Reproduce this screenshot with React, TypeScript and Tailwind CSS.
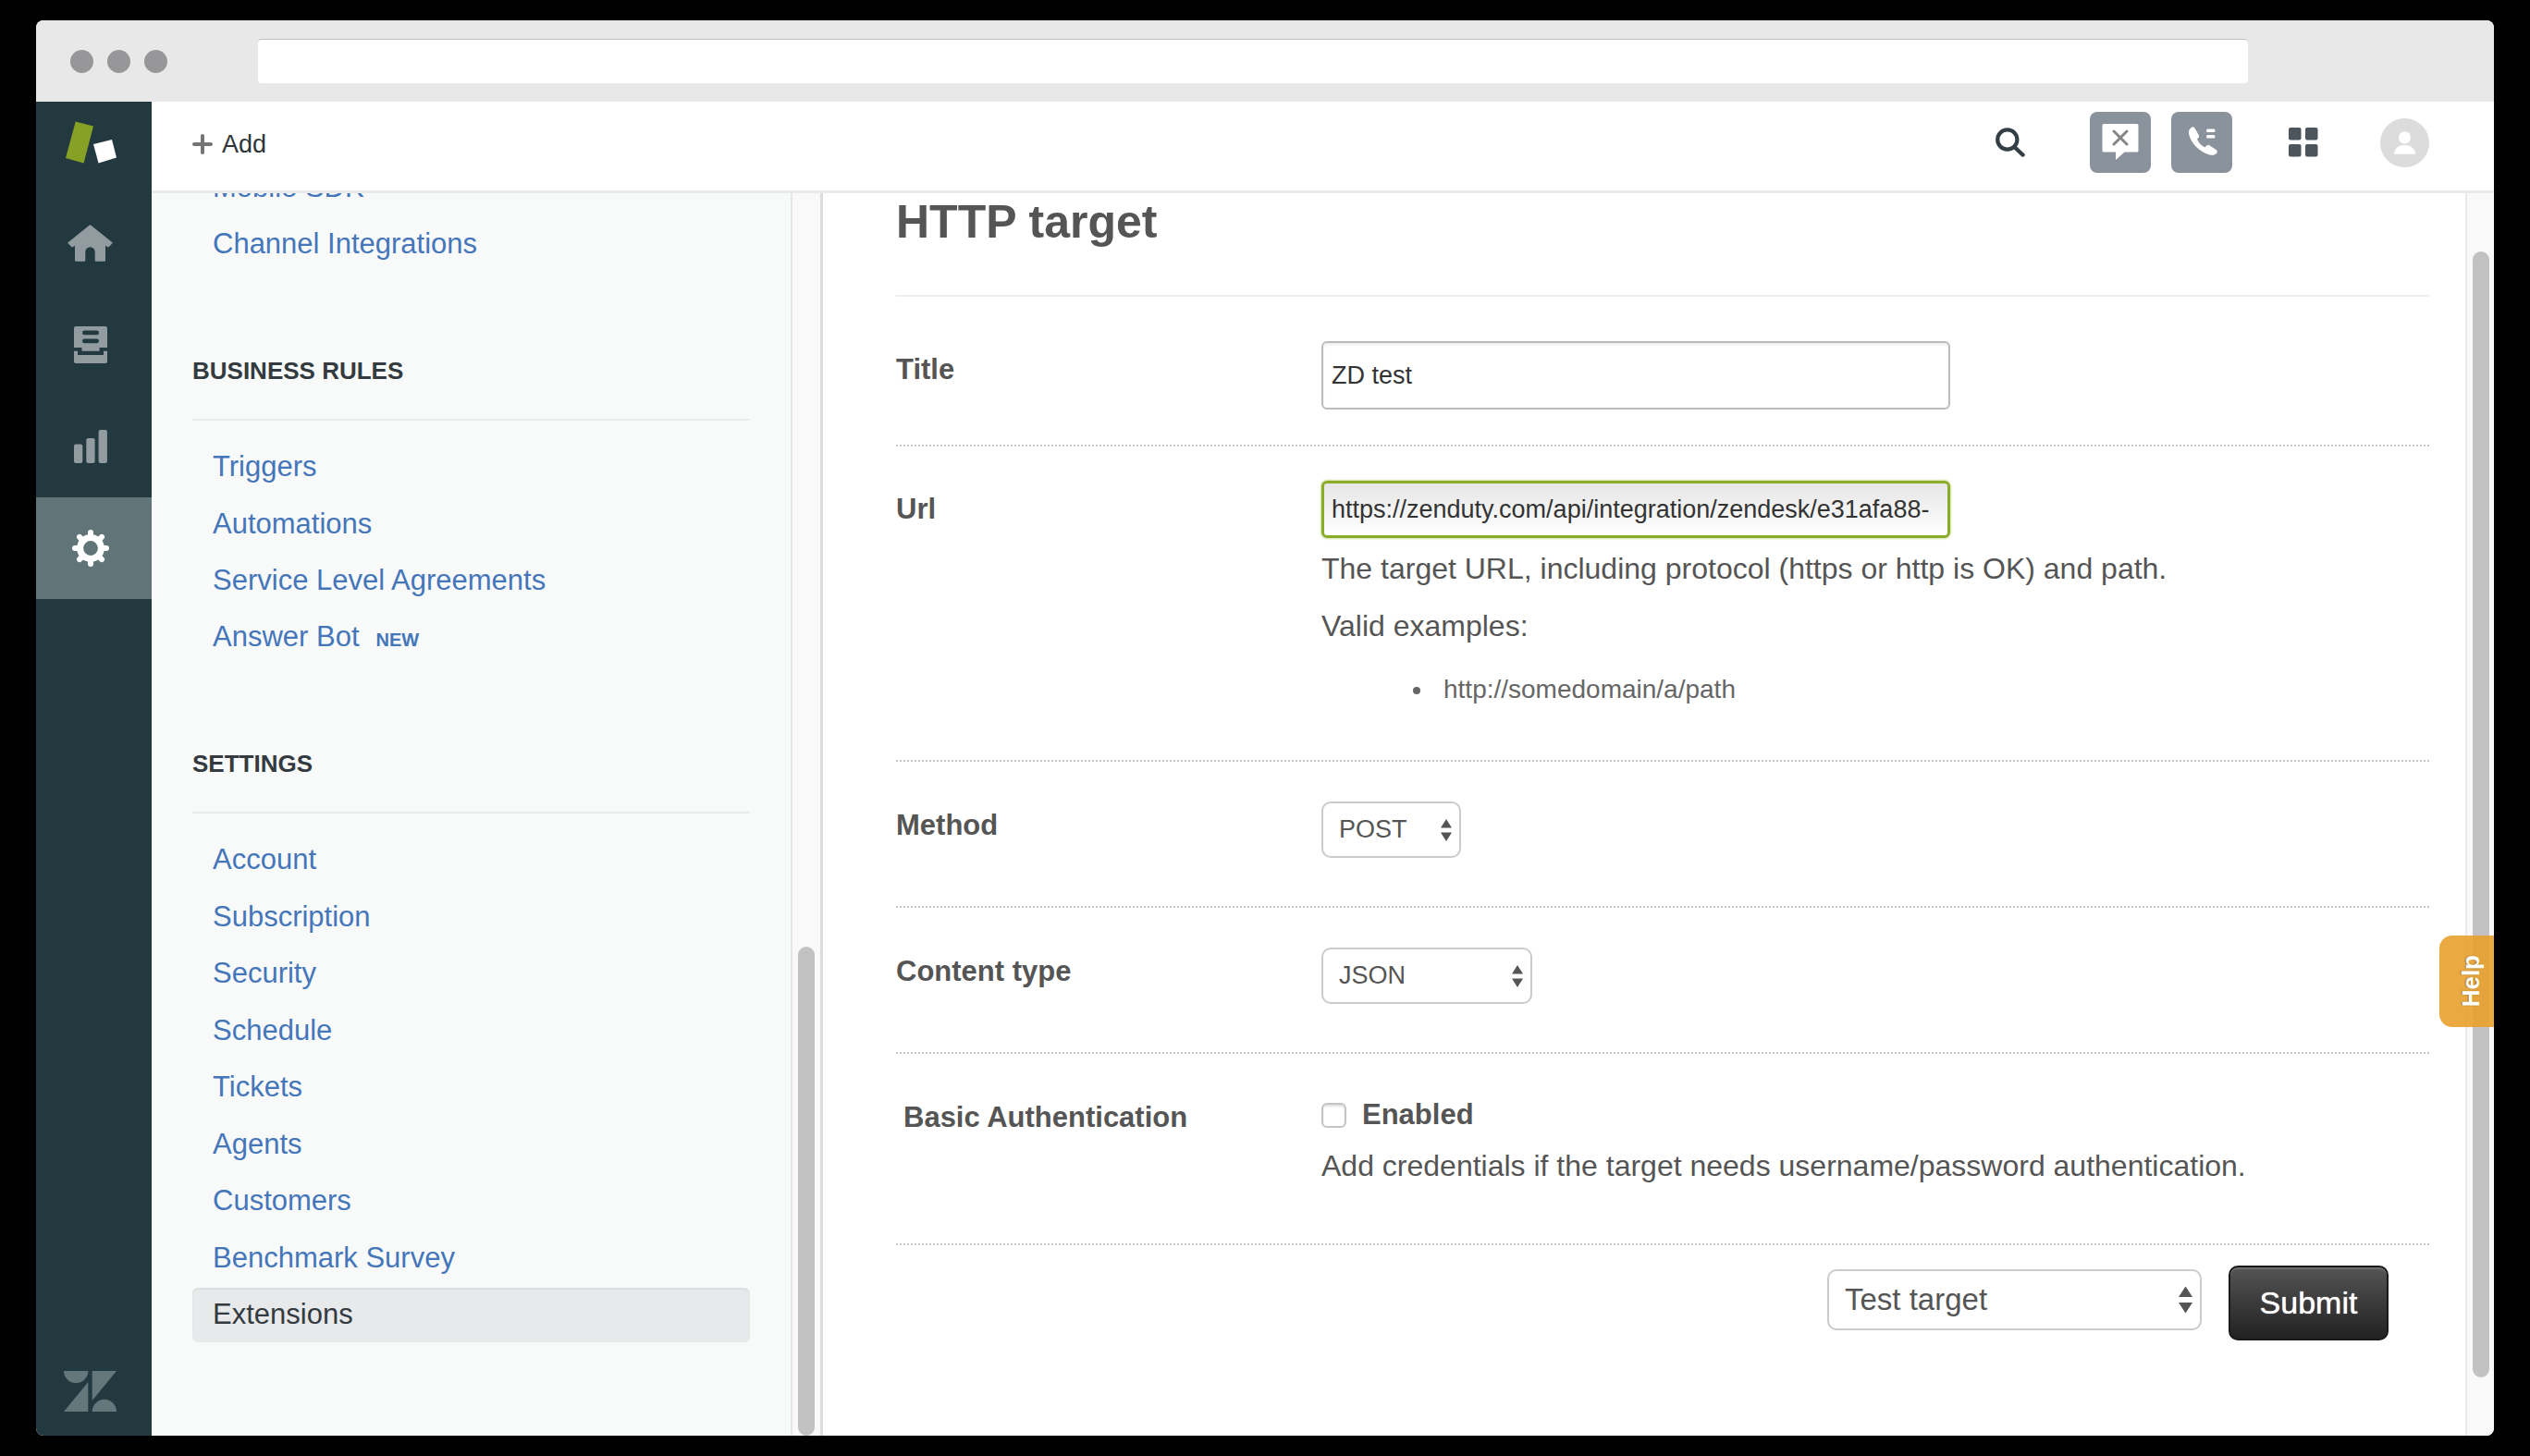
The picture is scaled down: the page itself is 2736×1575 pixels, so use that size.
import React from "react";

type NavItem = { label: string; icon: React.ReactNode; active?: boolean };
type Link = { label: string; badge?: string; active?: boolean };

const HomeIcon = () => (
  <svg width="49" height="40" viewBox="0 0 49 40" fill="#929ca0" stroke="#929ca0" strokeWidth="2" strokeLinejoin="round">
    <path d="M24.5 1.2 47.5 19.8 44 23.4 40 21V38.8H30.7V29.5a6.2 6.2 0 0 0-12.4 0V38.8H9V21L5 23.4 1.5 19.8Z" />
  </svg>
);

const TrayIcon = () => (
  <svg width="36" height="40" viewBox="0 0 36 40" fill="#929ca0">
    <path
      fillRule="evenodd"
      d="M2 0H34a2 2 0 0 1 2 2V23H27.5V26.8H8.5V23H0V2A2 2 0 0 1 2 0ZM11.3 4.6a2.3 2.3 0 0 0 0 4.6H24.7a2.3 2.3 0 0 0 0-4.6ZM11.3 13.6a2.3 2.3 0 0 0 0 4.6H24.7a2.3 2.3 0 0 0 0-4.6Z"
    />
    <path d="M0 26.8H4V31H32V26.8H36V38a2 2 0 0 1-2 2H2a2 2 0 0 1-2-2Z" />
  </svg>
);

const BarsIcon = () => (
  <svg width="36" height="36" viewBox="0 0 36 36" fill="#929ca0">
    <rect x="0" y="15.5" width="9.3" height="20.5" rx="2" />
    <rect x="13.3" y="9" width="9.3" height="27" rx="2" />
    <rect x="26.6" y="0" width="9.3" height="36" rx="2" />
  </svg>
);

const GearIcon = () => (
  <svg width="40" height="40" viewBox="0 0 40 40" fill="none" stroke="#fff">
    <circle cx="20" cy="20" r="11.4" strokeWidth="7" />
    {[0, 45, 90, 135, 180, 225, 270, 315].map((a) => (
      <path key={a} d="M20 7V3" strokeWidth="6" strokeLinecap="round" transform={`rotate(${a} 20 20)`} />
    ))}
  </svg>
);

const LogoIcon = () => (
  <svg width="56" height="46" viewBox="0 0 56 46">
    <path d="M11.7 0.5 31 5.5 20.5 45.5 1 40Z" fill="#86a126" />
    <path d="M31 25 51 20 56 39.5 36.5 45.5Z" fill="#fff" />
  </svg>
);

const BrandMark = () => (
  <svg width="57" height="44" viewBox="0 0 57 44" fill="#64777b">
    <path d="M0 0H26.3A13.15 13.15 0 0 1 0 0Z" />
    <path d="M26.3 12V44H0Z" />
    <path d="M30.7 0H57L30.7 32Z" />
    <path d="M30.7 44A13.15 13.15 0 0 1 57 44Z" />
  </svg>
);

const SearchIcon = () => (
  <svg width="32" height="32" viewBox="0 0 32 32" fill="none" stroke="#343e45">
    <circle cx="12.8" cy="13" r="10.6" strokeWidth="4.2" />
    <path d="M21 21.5 29.6 29.6" strokeWidth="4.2" strokeLinecap="round" />
  </svg>
);

const ChatIcon = () => (
  <svg width="66" height="66" viewBox="0 0 66 66">
    <path d="M15 13H51a1.500 1.500 0 0 1 1.500 1.500V42a1.500 1.500 0 0 1-1.500 1.500H37.500L28 52V43.500H15a1.500 1.500 0 0 1-1.500-1.500V14.500a1.500 1.500 0 0 1 1.500-1.500Z" fill="#fff" />
    <path d="M26 21 40 35M40 21 26 35" stroke="#858585" strokeWidth="3" strokeLinecap="round" />
  </svg>
);

const PhoneIcon = () => (
  <svg width="66" height="66" viewBox="0 0 66 66" fill="#fff">
    <path d="M22.500 16.500C24 15.800 25 16.500 25.700 18L30 25.500C30.500 27 29.500 28 28 29.500C29.500 33.500 32.500 36.500 36.500 38.500C38 36.500 39.500 35.300 41 36L48.500 41C50 42 49.900 43 49.300 44.500C47.500 46.800 44.500 47.300 41.500 46.500C30.500 43.500 21 33.500 19 23.500C18.500 20.500 20 17.800 22.500 16.500Z" />
    <rect x="38" y="18.500" width="9.500" height="3.500" rx="1.500" />
    <rect x="38" y="25" width="9.500" height="3.500" rx="1.500" />
  </svg>
);

const AppsIcon = () => (
  <svg width="32" height="32" viewBox="0 0 32 32" fill="#4c555c">
    <rect x="0" y="0" width="13.5" height="13.5" rx="2" />
    <rect x="18" y="0" width="13.5" height="13.5" rx="2" />
    <rect x="0" y="18" width="13.5" height="13.5" rx="2" />
    <rect x="18" y="18" width="13.5" height="13.5" rx="2" />
  </svg>
);

const AvatarIcon = () => (
  <svg width="53" height="53" viewBox="0 0 53 53">
    <circle cx="26.500" cy="26.500" r="26.500" fill="#dcdcdc" />
    <circle cx="26.500" cy="20.800" r="6.600" fill="#fff" />
    <path d="M15 38.700C15.500 32 20.500 29 26.500 29S37.500 32 38.200 38.700Z" fill="#fff" />
  </svg>
);

const SelectArrows = ({ large }: { large?: boolean }) => (
  <svg
    className="pointer-events-none absolute top-1/2 right-[10px] -translate-y-1/2"
    width={large ? 15 : 12}
    height={large ? 29 : 24}
    viewBox="0 0 12 24"
    preserveAspectRatio="none"
    fill="#555"
    aria-hidden="true"
  >
    <path d="M6 0 12 9.600H0Z" />
    <path d="M0 14.400H12L6 24Z" />
  </svg>
);

const navItems: NavItem[] = [
  { label: "Home", icon: <HomeIcon /> },
  { label: "Views", icon: <TrayIcon /> },
  { label: "Reporting", icon: <BarsIcon /> },
  { label: "Admin", icon: <GearIcon />, active: true },
];

const channelLinks: Link[] = [{ label: "Mobile SDK" }, { label: "Channel Integrations" }];

const ruleLinks: Link[] = [
  { label: "Triggers" },
  { label: "Automations" },
  { label: "Service Level Agreements" },
  { label: "Answer Bot", badge: "NEW" },
];

const settingLinks: Link[] = [
  { label: "Account" },
  { label: "Subscription" },
  { label: "Security" },
  { label: "Schedule" },
  { label: "Tickets" },
  { label: "Agents" },
  { label: "Customers" },
  { label: "Benchmark Survey" },
  { label: "Extensions", active: true },
];

function LinkList({ links, className }: { links: Link[]; className: string }) {
  return (
    <ul className={`flex flex-col justify-between ${className}`}>
      {links.map((l) => (
        <li key={l.label}>
          <a
            href="#"
            className={
              l.active
                ? "flex h-[59px] items-center rounded-md bg-[#e8e9eb] px-[22px] text-[31px] text-[#333b40] shadow-[inset_0_2px_2px_rgba(0,0,0,0.05)]"
                : "flex h-[59px] items-center px-[22px] text-[31px] text-[#4576b9]"
            }
          >
            <span className="flex items-baseline gap-[18px]">
              {l.label}
              {l.badge && <span className="text-[20px] font-bold">{l.badge}</span>}
            </span>
          </a>
        </li>
      ))}
    </ul>
  );
}

function SectionHeading({ children }: { children: React.ReactNode }) {
  return (
    <h2 className="mt-[87px] mb-[21px] border-b-2 border-[#e9ebed] pb-[32px] text-[26px] leading-[40px] font-bold text-[#333b40]">
      {children}
    </h2>
  );
}

function Row({
  label,
  htmlFor,
  className,
  labelClass,
  children,
}: {
  label: string;
  htmlFor: string;
  className: string;
  labelClass: string;
  children: React.ReactNode;
}) {
  return (
    <div className={`grid grid-cols-[460px_1fr] items-start border-b-2 border-dotted border-[#c8c8c8] ${className}`}>
      <label htmlFor={htmlFor} className={`text-[31px] leading-[42px] font-bold ${labelClass}`}>
        {label}
      </label>
      <div>{children}</div>
    </div>
  );
}

export default function App() {
  return (
    <div className="h-screen bg-black px-[39px] py-[22px] font-['Liberation_Sans',Arial,sans-serif]">
      <div className="flex h-full flex-col overflow-hidden rounded-lg bg-white">
        {/* Browser chrome */}
        <div className="flex h-[88px] shrink-0 items-center bg-[#e8e8e8] pr-[266px] pl-[37px]">
          <div className="mr-[98px] flex gap-[15px]">
            <span className="size-[25px] rounded-full bg-[#979799]" />
            <span className="size-[25px] rounded-full bg-[#979799]" />
            <span className="size-[25px] rounded-full bg-[#979799]" />
          </div>
          <input
            type="text"
            aria-label="Address"
            className="h-[48px] min-w-0 flex-1 rounded-sm border-t border-[#bdbdbd] bg-white px-4 text-[27px] outline-none"
          />
        </div>

        <div className="flex min-h-0 flex-1">
          {/* Icon rail */}
          <nav className="flex w-[125px] shrink-0 flex-col bg-[#233940]">
            <a href="#" aria-label="Dashboard" className="flex h-[98px] shrink-0 items-start justify-center pt-[21px] pr-2">
              <LogoIcon />
            </a>
            {navItems.map((n) => (
              <a
                key={n.label}
                href="#"
                aria-label={n.label}
                className={
                  n.active
                    ? "flex h-[110px] shrink-0 items-center justify-center bg-[#617578] pr-2"
                    : "flex h-[110px] shrink-0 items-center justify-center pr-2"
                }
              >
                {n.icon}
              </a>
            ))}
            <div className="mt-auto flex justify-center pr-2 pb-[26px]">
              <BrandMark />
            </div>
          </nav>

          <div className="flex min-w-0 flex-1 flex-col">
            {/* Toolbar */}
            <header className="flex h-[99px] shrink-0 items-start border-b-[3px] border-[#e9ebec] pr-[70px] pl-[44px]">
              <button type="button" className="mt-[24px] flex h-[44px] items-center gap-[10px] text-[27px] text-[#2f3538]">
                <svg width="22" height="22" viewBox="0 0 22 22" stroke="#757575" strokeWidth="4" strokeLinecap="round">
                  <path d="M11 2V20M2 11H20" />
                </svg>
                Add
              </button>
              <div className="mt-[11px] ml-auto flex items-center">
                <button type="button" aria-label="Search" className="mr-[70px]">
                  <SearchIcon />
                </button>
                <button type="button" aria-label="Chat" className="mr-[22px] rounded-lg bg-[#8a929c]">
                  <ChatIcon />
                </button>
                <button type="button" aria-label="Talk" className="mr-[61px] rounded-lg bg-[#8a929c]">
                  <PhoneIcon />
                </button>
                <button type="button" aria-label="Products" className="mr-[67px]">
                  <AppsIcon />
                </button>
                <button type="button" aria-label="Profile">
                  <AvatarIcon />
                </button>
              </div>
            </header>

            <div className="flex min-h-0 flex-1">
              {/* Settings menu */}
              <aside className="w-[691px] shrink-0 overflow-hidden bg-[#f8faf9] px-[44px]">
                <LinkList links={channelLinks} className="-mt-[35px] min-h-[120px]" />
                <SectionHeading>BUSINESS RULES</SectionHeading>
                <LinkList links={ruleLinks} className="min-h-[243px]" />
                <SectionHeading>SETTINGS</SectionHeading>
                <LinkList links={settingLinks} className="min-h-[551px]" />
              </aside>
              <div className="flex w-[35px] shrink-0 flex-col items-center border-r-[3px] border-l-2 border-r-[#dadcde] border-l-[#e6e6e6] bg-[#f9f9f9]">
                <div className="grow-[815]" />
                <div className="w-[18px] grow-[529] rounded-full bg-[#c2c2c2]" />
              </div>

              {/* Target form */}
              <main className="min-w-0 flex-1 overflow-hidden pr-[39px] pl-[79px] text-[#555]">
                <h1 className="border-b-2 border-[#eeeeee] pt-px pb-[49px] text-[50px] leading-[60px] font-bold">HTTP target</h1>
                <form onSubmit={(e) => e.preventDefault()}>
                  <Row label="Title" htmlFor="title" className="pt-[48px] pb-[38px]" labelClass="mt-[10px]">
                    <input
                      id="title"
                      type="text"
                      defaultValue="ZD test"
                      className="block h-[74px] w-[680px] rounded-md border-2 border-[#bcbcbc] px-[9px] text-[27px] text-[#333] shadow-[inset_0_2px_3px_rgba(0,0,0,0.08)] outline-none"
                    />
                  </Row>

                  <Row label="Url" htmlFor="url" className="pt-[37px] pb-[56px]" labelClass="mt-[10px]">
                    <input
                      id="url"
                      type="text"
                      defaultValue="https://zenduty.com/api/integration/zendesk/e31afa88-"
                      className="block h-[62px] w-[680px] rounded-md border-[3px] border-[#8bab2a] bg-linear-to-b from-[#e6e6e6] to-white px-[8px] text-[27px] text-[#333] shadow-[0_0_3px_#a5c043] outline-none"
                    />
                    <p className="mt-[2px] text-[32px] leading-[62px]">
                      The target URL, including protocol (https or http is OK) and path.
                    </p>
                    <p className="text-[32px] leading-[62px]">Valid examples:</p>
                    <ul className="mt-[18px] list-disc pl-[122px] text-[28px] leading-[40px] text-[#666]">
                      <li className="pl-[10px]">http://somedomain/a/path</li>
                    </ul>
                  </Row>

                  <Row label="Method" htmlFor="method" className="pt-[43px] pb-[52px]" labelClass="mt-[5px]">
                    <div className="relative w-[151px]">
                      <select
                        id="method"
                        defaultValue="POST"
                        className="block h-[61px] w-full appearance-none rounded-[10px] border-2 border-[#cbcbcb] bg-white pl-[17px] text-[27px] text-[#555] outline-none"
                      >
                        <option>POST</option>
                      </select>
                      <SelectArrows />
                    </div>
                  </Row>

                  <Row label="Content type" htmlFor="content-type" className="pt-[43px] pb-[52px]" labelClass="mt-[5px]">
                    <div className="relative w-[228px]">
                      <select
                        id="content-type"
                        defaultValue="JSON"
                        className="block h-[61px] w-full appearance-none rounded-[10px] border-2 border-[#cbcbcb] bg-white pl-[17px] text-[27px] text-[#555] outline-none"
                      >
                        <option>JSON</option>
                      </select>
                      <SelectArrows />
                    </div>
                  </Row>

                  <Row label="Basic Authentication" htmlFor="enabled" className="pt-[46px] pb-[53px]" labelClass="mt-[2px] pl-[8px]">
                    <div className="flex items-center gap-[17px]">
                      <input
                        id="enabled"
                        type="checkbox"
                        className="size-[27px] appearance-none rounded-md border-2 border-[#c4c4c4] bg-white shadow-[inset_0_2px_2px_rgba(0,0,0,0.12)]"
                      />
                      <label htmlFor="enabled" className="text-[31px] leading-[40px] font-bold">
                        Enabled
                      </label>
                    </div>
                    <p className="mt-1 text-[32px] leading-[62px]">
                      Add credentials if the target needs username/password authentication.
                    </p>
                  </Row>

                  <div className="flex items-start justify-end gap-[29px] pt-[22px] pr-[44px]">
                    <div className="relative mt-[4px] w-[405px]">
                      <select
                        aria-label="Action"
                        defaultValue="Test target"
                        className="block h-[66px] w-full appearance-none rounded-[10px] border-2 border-[#cbcbcb] bg-white pl-[17px] text-[33px] text-[#555] outline-none"
                      >
                        <option>Test target</option>
                      </select>
                      <SelectArrows large />
                    </div>
                    <button
                      type="submit"
                      className="h-[81px] w-[173px] rounded-[10px] border-2 border-[#1a1a1a] bg-linear-to-b from-[#555] to-[#222] text-[34px] text-white shadow-[inset_0_2px_0_rgba(255,255,255,0.15)] [text-shadow:0_0_1px_#fff]"
                    >
                      Submit
                    </button>
                  </div>
                </form>
              </main>

              <div className="relative flex w-[31px] shrink-0 flex-col items-end border-l-2 border-[#e9e9e9] bg-[#f9f9f9] pr-[5px]">
                <div className="grow-[63]" />
                <div className="w-[18px] grow-[1218] rounded-full bg-[#c2c2c2]" />
                <div className="grow-[63]" />
                <button
                  type="button"
                  className="absolute top-[803px] right-0 flex h-[99px] w-[59px] items-center justify-center rounded-l-[14px] bg-[#e9a12c]/90 pl-[8px] text-white"
                >
                  <span className="rotate-180 text-[26px] leading-[30px] font-bold [writing-mode:vertical-rl] [text-shadow:0_-1px_2px_rgba(0,0,0,0.3)]">Help</span>
                </button>
              </div>
            </div>
          </div>
        </div>
      </div>
    </div>
  );
}
